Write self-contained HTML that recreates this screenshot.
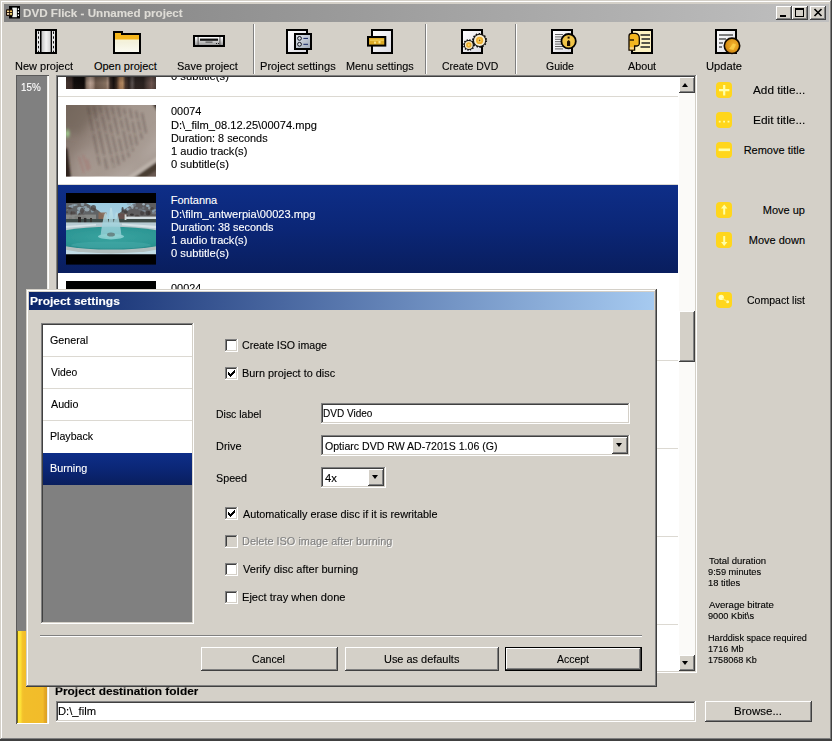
<!DOCTYPE html>
<html><head><meta charset="utf-8"><title>DVD Flick</title>
<style>
html,body{margin:0;padding:0;}
body{width:832px;height:741px;overflow:hidden;background:#d4d0c8;position:relative;font-family:"Liberation Sans",sans-serif;font-size:11px;}
.a{position:absolute;box-sizing:border-box;}
.t{-webkit-text-stroke:0.12px;position:absolute;white-space:nowrap;transform-origin:0 50%;display:inline-block;font-family:"Liberation Sans",sans-serif;}
/* 3D borders */
.win{background:#d4d0c8;box-shadow:inset -1px -1px #404040,inset 1px 1px #d4d0c8,inset -2px -2px #808080,inset 2px 2px #fff;}
.btn{background:#d4d0c8;box-shadow:inset -1px -1px #404040,inset 1px 1px #fff,inset -2px -2px #808080,inset 2px 2px #d4d0c8;}
.sunk{background:#fff;box-shadow:inset -1px -1px #fff,inset 1px 1px #808080,inset -2px -2px #d4d0c8,inset 2px 2px #404040;}
.sep{width:2px;border-left:1px solid #808080;border-right:1px solid #fff;}
.hsep{height:2px;border-top:1px solid #808080;border-bottom:1px solid #fff;}
.yi{background:#ffd61c;border-radius:4px;width:16.6px;height:16.4px;}
.isep{height:1px;background:#dcd9d2;}
.cb{width:13px;height:13px;}
svg{position:absolute;overflow:visible;}

</style></head>
<body>
<!-- main window frame -->
<div class="a" style="left:0;top:0;width:832px;height:741px;background:#404040;"></div>
<div class="a win" style="left:0;top:0;width:832px;height:740.4px;"></div>
<!-- inactive title bar -->
<div class="a" style="left:4px;top:4px;width:825px;height:18px;background:linear-gradient(90deg,#808080 0%,#c0c0c0 100%);"></div>
<!--TITLEICON-->
<!-- caption buttons -->
<div class="a btn" style="left:776px;top:6px;width:16px;height:14px;"></div>
<div class="a btn" style="left:792px;top:6px;width:16px;height:14px;"></div>
<div class="a btn" style="left:810px;top:6px;width:16px;height:14px;"></div>
<div class="a" style="left:780px;top:15px;width:6px;height:2px;background:#000;"></div>
<div class="a" style="left:795px;top:8px;width:9px;height:9px;border:1px solid #000;border-top-width:2px;"></div>
<svg style="left:814px;top:9px;" width="8" height="7" viewBox="0 0 8 7"><path d="M0.5 0 L7.5 7 M7.5 0 L0.5 7" stroke="#000" stroke-width="1.6" fill="none"/></svg>

<!-- toolbar separators -->
<div class="a sep" style="left:253px;top:24px;height:50px;"></div>
<div class="a sep" style="left:425px;top:24px;height:50px;"></div>
<div class="a sep" style="left:515px;top:24px;height:50px;"></div>
<!--TOOLICONS_START-->
<svg style="left:0;top:0;" width="832" height="76" viewBox="0 0 832 76">
<defs>
<linearGradient id="silv" x1="0" y1="0" x2="1" y2="0"><stop offset="0" stop-color="#c4c4c4"/><stop offset="0.5" stop-color="#f4f4f4"/><stop offset="1" stop-color="#d0d0d0"/></linearGradient>
<linearGradient id="silv2" x1="0" y1="0" x2="0" y2="1"><stop offset="0" stop-color="#ffffff"/><stop offset="1" stop-color="#9c9c9c"/></linearGradient>
<linearGradient id="cream" x1="0" y1="0" x2="0" y2="1"><stop offset="0" stop-color="#fdf6c4"/><stop offset="0.5" stop-color="#f3f1dc"/><stop offset="1" stop-color="#fbfbf3"/></linearGradient>
<linearGradient id="page" x1="0" y1="0" x2="1" y2="1"><stop offset="0" stop-color="#ffffff"/><stop offset="1" stop-color="#dcdce4"/></linearGradient>
<linearGradient id="bluep" x1="0" y1="0" x2="1" y2="1"><stop offset="0" stop-color="#e4e8ee"/><stop offset="1" stop-color="#9aa6b8"/></linearGradient>
<radialGradient id="gold2" cx="0.5" cy="0.5" r="0.6"><stop offset="0" stop-color="#f4cc50"/><stop offset="0.75" stop-color="#eec044"/><stop offset="1" stop-color="#f6e4a0"/></radialGradient>
<radialGradient id="gold3" cx="0.6" cy="0.45" r="0.7"><stop offset="0" stop-color="#f4b430"/><stop offset="0.6" stop-color="#dc9418"/><stop offset="1" stop-color="#b87010"/></radialGradient>
<radialGradient id="gold" cx="0.6" cy="0.4" r="0.7"><stop offset="0" stop-color="#fcd04a"/><stop offset="1" stop-color="#d8921a"/></radialGradient>
</defs>
<!-- title icon -->
<g>
<rect x="9" y="6" width="11" height="12.5" fill="#000"/>
<rect x="12.3" y="7.6" width="4.6" height="9.6" fill="#eef2ee"/>
<rect x="17.8" y="8.4" width="1.2" height="1.6" fill="#fff"/><rect x="17.8" y="11.4" width="1.2" height="1.6" fill="#fff"/><rect x="17.8" y="14.4" width="1.2" height="1.6" fill="#fff"/>
<rect x="6" y="9.3" width="6.8" height="6.6" rx="1" fill="#1c0e04"/>
<rect x="7" y="10.5" width="2.2" height="1.6" fill="#f8d890"/><rect x="10" y="10.5" width="2" height="1.6" fill="#f4c860"/>
<rect x="7" y="13" width="2.2" height="1.8" fill="#f4d8b0"/><rect x="10" y="13" width="2" height="1.8" fill="#f0d878"/>
</g>
<!-- new project: film -->
<g>
<rect x="35" y="29" width="22" height="25" fill="#000"/>
<rect x="37" y="31" width="3" height="21" fill="#e6e6e6"/>
<rect x="52" y="31" width="3" height="21" fill="#e6e6e6"/>
<path d="M38.5 31.5 V52" stroke="#111" stroke-width="1" stroke-dasharray="2.4 2.4" fill="none"/>
<path d="M53.5 31.5 V52" stroke="#111" stroke-width="1" stroke-dasharray="2.4 2.4" fill="none"/>
<rect x="41.5" y="31" width="9.2" height="21" fill="url(#silv)"/>
</g>
<!-- open project: folder -->
<g>
<path d="M114 32 H122 V34 H140 V53 H114 Z" fill="url(#cream)" stroke="#000" stroke-width="2" stroke-linejoin="miter"/>
<path d="M115 33 H121 V35 H139 V39.6 H115 Z" fill="#f5b61c"/>
</g>
<!-- save project: drive -->
<g>
<rect x="193" y="35" width="32" height="12" fill="#000"/>
<rect x="195" y="37" width="28" height="8" fill="url(#silv2)"/>
<rect x="197.6" y="37" width="1" height="8" fill="#555"/><rect x="219.4" y="37" width="1" height="8" fill="#555"/>
<rect x="200" y="38.6" width="18" height="2.2" fill="#111"/>
<rect x="205.5" y="41.6" width="7" height="1" fill="#444"/>
<rect x="216" y="43" width="1" height="1" fill="#222"/><rect x="218" y="43" width="1" height="1" fill="#222"/>
</g>
<!-- project settings -->
<g>
<rect x="287" y="30" width="20" height="23" fill="url(#page)" stroke="#000" stroke-width="2"/>
<rect x="295" y="34" width="16" height="15" fill="url(#bluep)" stroke="#000" stroke-width="2"/>
<circle cx="299.5" cy="38.4" r="1.9" fill="#d4d8e0" stroke="#101420" stroke-width="1"/>
<circle cx="299.5" cy="44.3" r="1.9" fill="#d4d8e0" stroke="#101420" stroke-width="1"/>
<path d="M303.4 38.4 H308 M303.4 44.3 H308" stroke="#102060" stroke-width="1"/>
</g>
<!-- menu settings -->
<g>
<rect x="372" y="30" width="20" height="23" fill="url(#page)" stroke="#000" stroke-width="2"/>
<rect x="368" y="37" width="17.3" height="8.6" fill="#dcaa26" stroke="#000" stroke-width="2"/>
<rect x="370" y="39.6" width="14" height="1" fill="#f8dc6c"/>
<rect x="374" y="41.6" width="2" height="2" fill="#fbe48a"/><rect x="378.5" y="41" width="2" height="2.4" fill="#fbe48a"/>
</g>
<!-- create dvd -->
<g>
<rect x="462" y="30" width="20" height="23" fill="url(#page)" stroke="#000" stroke-width="2"/>
<g transform="translate(468.8,45)">
<circle r="5" fill="#111" stroke="#111" stroke-width="1.6" stroke-dasharray="1.3 1.3"/>
<circle r="4" fill="#f4e6c0"/><circle r="2.7" fill="#eeb030"/><circle r="0.9" fill="#f8dc80"/>
</g>
<g transform="translate(479.6,40.4)">
<circle r="6.6" fill="#111" stroke="#111" stroke-width="1.8" stroke-dasharray="1.5 1.5"/>
<circle r="5.6" fill="#f6ecd0"/><circle r="3.6" fill="#eeb030"/><circle r="1.9" fill="#f6d060"/><circle r="0.8" fill="#7a4a10"/>
</g>
</g>
<!-- guide -->
<g>
<rect x="552" y="30" width="20" height="23" fill="url(#page)" stroke="#000" stroke-width="2"/>
<path d="M555 34.5 H563 M555 36.9 H563 M555 39.3 H563 M555 41.7 H563 M555 44.1 H563 M555 46.5 H563 M555 48.9 H563" stroke="#555" stroke-width="0.9"/>
<circle cx="568.6" cy="41.2" r="7.2" fill="url(#gold2)" stroke="#000" stroke-width="1.8"/>
<rect x="567.6" y="36.6" width="2" height="2" fill="#201000"/>
<path d="M567 46 V41.6 L568.6 40 L570.2 41.6 V46 Z" fill="#201000"/>
</g>
<!-- about -->
<g>
<rect x="632" y="30" width="20" height="23" fill="#fdf2c2" stroke="#000" stroke-width="2"/>
<path d="M640.5 35 H650 M641.5 39 H650 M641.5 43 H650 M640.5 47 H650" stroke="#222" stroke-width="1.6"/>
<path d="M629 36 Q629 33.4 632 33.4 H635.5 Q639.3 34 639.3 38 V44 Q639 45.6 637 46 H634.6 V50.2 H629 Z" fill="#f3b620" stroke="#100800" stroke-width="1.3"/>
<path d="M629.6 40 H634" stroke="#100800" stroke-width="1.3"/>
<rect x="629.8" y="47.2" width="4" height="2.2" fill="#f8d48c"/>
</g>
<!-- update -->
<g>
<rect x="716" y="30" width="20" height="23" fill="url(#page)" stroke="#000" stroke-width="2"/>
<path d="M719 35 H733 M719 39 H726 M719 43 H723 M719 47 H722" stroke="#555" stroke-width="1.6"/>
<circle cx="732" cy="45.8" r="7.7" fill="url(#gold3)" stroke="#100800" stroke-width="1.6"/>
<path d="M729 49 L733 43.5 L736 44.5 L733.5 50 Z" fill="#fcd24a" opacity="0.8"/>
</g>
</svg>
<!--TOOLICONS_END-->

<!-- progress bar -->
<div class="a" style="left:16px;top:75px;width:33px;height:649px;background:#808080;box-shadow:inset 1px 1px #5a5a5a,inset -1px -1px #fff,inset -2px 0 #f0eee8;"></div>
<div class="a" style="left:17px;top:631px;width:30px;height:92px;background:linear-gradient(90deg,#5e5210 0,#8a7a14 0.8px,#ffe436 1.4px,#fde038 3.4px,#f4c42c 5.5px,#f2be2a 7px,#f2bc2a 26px,#e6aa26 27.5px,#dca022 30px);"></div>

<!-- title list -->
<div class="a sunk" style="left:56px;top:75px;width:641px;height:598px;"></div>
<div class="a" id="list" style="left:58px;top:77px;width:637px;height:594px;overflow:hidden;background:#fff;">
  <!-- item 1 (partial) thumb -->
  <div class="a" style="left:8px;top:0;width:90px;height:11.7px;background:linear-gradient(180deg,rgba(0,0,0,0.25) 0%,rgba(0,0,0,0) 50%,rgba(60,40,30,0.15) 100%),linear-gradient(90deg,#42342f 0%,#3a2c28 6%,#120e0d 9%,#0e0a0a 20%,#8a7668 23%,#b8a092 27%,#a48c7e 30%,#6c584b 33%,#7a6658 40%,#86705f 44%,#a48c7c 46.5%,#3a2c26 49%,#16100e 53%,#3a2a20 56%,#a87c58 60%,#b08860 63%,#4a382e 66%,#2a2220 70%,#5a5250 73.5%,#2c2422 77%,#2a2220 86%,#4c3e3a 90%,#6e5650 95%,#4a3c38 100%);"></div>
  <div class="a isep" style="left:0;top:19px;width:620px;"></div>
  <!-- item 2 thumb -->
  <svg style="left:8px;top:28px;" width="90" height="71.5" viewBox="0 0 90 71.5">
<defs>
<linearGradient id="p2" x1="0" y1="0" x2="1" y2="0.5"><stop offset="0" stop-color="#786960"/><stop offset="0.3" stop-color="#8c7d74"/><stop offset="0.6" stop-color="#a3968d"/><stop offset="1" stop-color="#a89c94"/></linearGradient>
<radialGradient id="g2" cx="0.5" cy="0.5" r="0.5"><stop offset="0" stop-color="#b4eca0" stop-opacity="0.95"/><stop offset="0.5" stop-color="#98cc8a" stop-opacity="0.55"/><stop offset="1" stop-color="#88a080" stop-opacity="0"/></radialGradient>
<filter id="b2" x="-5%" y="-5%" width="110%" height="110%"><feGaussianBlur stdDeviation="0.8"/></filter>
<filter id="b2b" x="-20%" y="-20%" width="140%" height="140%"><feGaussianBlur stdDeviation="4"/></filter>
<clipPath id="c2"><rect x="0" y="0" width="90" height="71.5"/></clipPath>
</defs>
<g clip-path="url(#c2)">
<rect x="-2" y="-2" width="94" height="76" fill="url(#p2)"/>
<g filter="url(#b2b)">
<path d="M-6 -6 H40 L14 30 L-6 26 Z" fill="#6e6058" opacity="0.55"/>
<path d="M30 80 L96 44 V22 L56 80 Z" fill="#b8aea6" opacity="0.6"/>
<path d="M8 50 L30 40 L28 76 L8 76 Z" fill="#aa9c94" opacity="0.5"/>
</g>
<g filter="url(#b2)">
<path d="M58 74 L92 51 V56 L66 74 Z" fill="#c4bab2" opacity="0.7"/>
<path d="M66 74 L92 56 V74 Z" fill="#4a3c33"/>
<path d="M78 74 L92 64 V74 Z" fill="#6a5a52"/>
<path d="M-2 42 L1.5 44 L5 74 H-2 Z" fill="#2e221e"/>
<path d="M86.5 -2 H92 V7 Z" fill="#2a201c"/>
<g stroke="#3e302a" stroke-width="1.4" fill="none" opacity="0.42">
<path d="M22 2 L34 62" stroke-dasharray="9 2 14 3 20 2"/><path d="M28 2 L41 64" stroke-dasharray="12 2 8 2 25 3"/><path d="M34 2 L48 62" stroke-dasharray="7 2 16 2 22 2"/><path d="M40 2 L53 60" stroke-dasharray="14 3 10 2 18 2"/><path d="M46 2 L58 56" stroke-dasharray="8 2 19 3 14 2"/><path d="M52 2 L63 52" stroke-dasharray="11 2 9 2 20 2"/><path d="M58 4 L67 46" stroke-dasharray="6 2 15 3 12 2"/><path d="M64 4 L71 40" stroke-dasharray="10 3 12 2"/><path d="M70 6 L76 34" stroke-dasharray="8 2 10 2"/><path d="M76 8 L80 28"/>
</g>
<g stroke="#a4504c" stroke-width="1.2" fill="none" opacity="0.4">
<path d="M13 52 L18 68"/><path d="M17 50 L22 66"/><path d="M21 54 L24 64"/>
</g>
<ellipse cx="1.5" cy="28.5" rx="3.6" ry="6.5" fill="url(#g2)"/>
</g>
</g>
</svg>
  <div class="a isep" style="left:0;top:107px;width:620px;"></div>
  <!-- item 3 selected -->
  <div class="a" style="left:0;top:108px;width:620px;height:88px;background:linear-gradient(180deg,#0e2e88 0%,#0b2676 50%,#091e5e 100%);"></div>
  <svg style="left:8px;top:116px;" width="90" height="71.6" viewBox="0 0 90 71.6">
<defs>
<filter id="b3" x="-5%" y="-5%" width="110%" height="110%"><feGaussianBlur stdDeviation="0.7"/></filter>
<clipPath id="c3"><rect x="0" y="10" width="90" height="51.2"/></clipPath>
<linearGradient id="sky3" x1="0" y1="0" x2="0" y2="1"><stop offset="0" stop-color="#9ccbe0"/><stop offset="1" stop-color="#c4dde6"/></linearGradient>
<radialGradient id="pool3" cx="0.5" cy="0.45" r="0.6"><stop offset="0" stop-color="#3aa4a0"/><stop offset="0.7" stop-color="#2c9694"/><stop offset="1" stop-color="#2a8a8a"/></radialGradient>
<linearGradient id="jet3" x1="0" y1="0" x2="0" y2="1"><stop offset="0" stop-color="#c4e2ea" stop-opacity="0.85"/><stop offset="0.6" stop-color="#a0d2dc" stop-opacity="0.85"/><stop offset="1" stop-color="#84c8cc" stop-opacity="0.9"/></linearGradient>
</defs>
<rect x="0" y="0" width="90" height="71.6" fill="#000"/>
<g clip-path="url(#c3)">
<rect x="0" y="10" width="90" height="52" fill="url(#sky3)"/>
<g filter="url(#b3)">
<!-- trees -->
<path d="M-2 10 H20 L27 14 L33 18 L37 22 V30 H-2 Z" fill="#5a5656" opacity="0.9"/>
<path d="M92 10 H70 L62 14 L56 18 L51 22 V30 H92 Z" fill="#585252" opacity="0.9"/>
<ellipse cx="9.7" cy="11.9" rx="2.0" ry="0.9" fill="#a4c6da" opacity="0.48"/>
<ellipse cx="1.7" cy="15.3" rx="1.1" ry="1.4" fill="#a4c6da" opacity="0.43"/>
<ellipse cx="16.5" cy="11.1" rx="1.9" ry="2.1" fill="#a4c6da" opacity="0.55"/>
<ellipse cx="11.9" cy="19.8" rx="1.1" ry="2.0" fill="#b8d2e0" opacity="0.50"/>
<ellipse cx="16.2" cy="15.9" rx="1.9" ry="1.8" fill="#a4c6da" opacity="0.55"/>
<ellipse cx="19.2" cy="14.0" rx="1.9" ry="0.9" fill="#a4c6da" opacity="0.57"/>
<ellipse cx="14.9" cy="15.6" rx="2.2" ry="1.5" fill="#7c8894" opacity="0.48"/>
<ellipse cx="7.5" cy="12.2" rx="2.2" ry="0.9" fill="#b8d2e0" opacity="0.53"/>
<ellipse cx="26.3" cy="17.4" rx="1.5" ry="2.2" fill="#a4c6da" opacity="0.53"/>
<ellipse cx="4.9" cy="13.7" rx="2.5" ry="1.4" fill="#a4c6da" opacity="0.62"/>
<ellipse cx="17.2" cy="18.8" rx="1.5" ry="1.8" fill="#7c8894" opacity="0.55"/>
<ellipse cx="13.7" cy="18.5" rx="2.5" ry="1.5" fill="#a4c6da" opacity="0.37"/>
<ellipse cx="21.0" cy="16.6" rx="2.6" ry="2.0" fill="#b8d2e0" opacity="0.60"/>
<ellipse cx="26.6" cy="13.8" rx="2.5" ry="1.3" fill="#a4c6da" opacity="0.52"/>
<ellipse cx="6.5" cy="13.2" rx="2.2" ry="1.4" fill="#7c8894" opacity="0.38"/>
<ellipse cx="13.5" cy="15.7" rx="2.4" ry="1.9" fill="#b8d2e0" opacity="0.60"/>
<ellipse cx="89.6" cy="17.0" rx="1.6" ry="1.1" fill="#a4c6da" opacity="0.41"/>
<ellipse cx="65.4" cy="12.7" rx="1.8" ry="1.6" fill="#b8d2e0" opacity="0.45"/>
<ellipse cx="62.7" cy="15.6" rx="2.0" ry="1.2" fill="#8ea0ae" opacity="0.59"/>
<ellipse cx="74.5" cy="16.4" rx="2.1" ry="0.9" fill="#7c8894" opacity="0.49"/>
<ellipse cx="70.6" cy="15.1" rx="1.6" ry="1.1" fill="#8ea0ae" opacity="0.50"/>
<ellipse cx="61.5" cy="16.2" rx="1.2" ry="1.6" fill="#a4c6da" opacity="0.68"/>
<ellipse cx="77.6" cy="11.2" rx="1.3" ry="1.3" fill="#b8d2e0" opacity="0.68"/>
<ellipse cx="77.3" cy="15.0" rx="1.2" ry="1.5" fill="#7c8894" opacity="0.52"/>
<ellipse cx="68.0" cy="11.9" rx="2.2" ry="1.8" fill="#7c8894" opacity="0.64"/>
<ellipse cx="63.2" cy="10.7" rx="2.5" ry="1.5" fill="#8ea0ae" opacity="0.59"/>
<ellipse cx="87.3" cy="17.7" rx="1.5" ry="1.7" fill="#a4c6da" opacity="0.59"/>
<ellipse cx="66.4" cy="14.0" rx="1.3" ry="1.9" fill="#b8d2e0" opacity="0.57"/>
<ellipse cx="77.6" cy="18.0" rx="2.2" ry="1.1" fill="#8ea0ae" opacity="0.64"/>
<ellipse cx="81.7" cy="12.7" rx="1.8" ry="1.3" fill="#a4c6da" opacity="0.70"/>
<ellipse cx="83.3" cy="15.0" rx="1.3" ry="1.6" fill="#b8d2e0" opacity="0.51"/>
<ellipse cx="88.0" cy="19.9" rx="2.5" ry="1.3" fill="#8ea0ae" opacity="0.39"/>
<ellipse cx="16.0" cy="17.7" rx="2.0" ry="3.0" fill="#463e3c" opacity="0.74"/>
<ellipse cx="16.3" cy="22.1" rx="2.6" ry="1.2" fill="#463e3c" opacity="0.45"/>
<ellipse cx="13.2" cy="23.0" rx="1.4" ry="2.8" fill="#3a3434" opacity="0.72"/>
<ellipse cx="11.3" cy="24.2" rx="2.9" ry="1.8" fill="#3a3434" opacity="0.70"/>
<ellipse cx="2.9" cy="15.2" rx="3.0" ry="1.1" fill="#463e3c" opacity="0.76"/>
<ellipse cx="27.4" cy="15.0" rx="2.7" ry="3.0" fill="#463e3c" opacity="0.77"/>
<ellipse cx="5.3" cy="20.7" rx="1.0" ry="2.6" fill="#463e3c" opacity="0.66"/>
<ellipse cx="17.9" cy="26.1" rx="1.9" ry="2.7" fill="#2e2a2a" opacity="0.41"/>
<ellipse cx="7.2" cy="20.0" rx="2.5" ry="1.7" fill="#463e3c" opacity="0.57"/>
<ellipse cx="4.5" cy="25.7" rx="1.7" ry="1.9" fill="#463e3c" opacity="0.73"/>
<ellipse cx="17.6" cy="24.6" rx="2.8" ry="1.3" fill="#2e2a2a" opacity="0.61"/>
<ellipse cx="0.6" cy="19.2" rx="1.4" ry="1.0" fill="#2e2a2a" opacity="0.47"/>
<ellipse cx="71.0" cy="23.2" rx="2.1" ry="1.7" fill="#463e3c" opacity="0.61"/>
<ellipse cx="71.4" cy="23.9" rx="2.8" ry="1.1" fill="#2e2a2a" opacity="0.51"/>
<ellipse cx="81.8" cy="20.1" rx="2.1" ry="2.5" fill="#2e2a2a" opacity="0.58"/>
<ellipse cx="76.1" cy="20.1" rx="2.0" ry="2.4" fill="#3a3434" opacity="0.60"/>
<ellipse cx="83.1" cy="20.1" rx="1.5" ry="2.0" fill="#3a3434" opacity="0.77"/>
<ellipse cx="86.1" cy="15.8" rx="1.9" ry="1.8" fill="#3a3434" opacity="0.58"/>
<ellipse cx="56.6" cy="16.4" rx="1.1" ry="2.3" fill="#2e2a2a" opacity="0.76"/>
<ellipse cx="59.6" cy="23.0" rx="2.3" ry="1.3" fill="#2e2a2a" opacity="0.79"/>
<ellipse cx="61.9" cy="26.3" rx="1.8" ry="2.0" fill="#463e3c" opacity="0.73"/>
<ellipse cx="59.8" cy="19.0" rx="2.0" ry="1.7" fill="#2e2a2a" opacity="0.54"/>
<ellipse cx="57.3" cy="18.1" rx="1.7" ry="1.9" fill="#463e3c" opacity="0.41"/>
<ellipse cx="65.9" cy="21.7" rx="2.0" ry="1.1" fill="#2e2a2a" opacity="0.79"/>
<!-- buildings -->
<rect x="32.5" y="19.5" width="8" height="7" fill="#8a6a58" opacity="0.9"/>
<rect x="52" y="20.5" width="9" height="5.5" fill="#66504a" opacity="0.9"/>
<rect x="0" y="21.6" width="30" height="4.6" fill="#9a9c9a" opacity="0.65"/>
<!-- hedge / people -->
<rect x="-2" y="26" width="94" height="4" fill="#3e4a46"/>
<rect x="60" y="23.6" width="32" height="2.4" fill="#d4dee2"/>
<rect x="58.6" y="21.4" width="1.8" height="5.6" fill="#cfd8d8"/>
<rect x="12" y="24" width="3" height="6" fill="#2a2826"/><rect x="18" y="25" width="2.4" height="5" fill="#2c2a2a"/><rect x="24" y="25" width="2" height="5" fill="#34302e"/>
<!-- pavement -->
<rect x="-2" y="29.4" width="94" height="10" fill="#b6cad2"/>
<path d="M-2 33 L30 31 L30 32.6 L-2 35 Z" fill="#dfe9ec" opacity="0.8"/>
<path d="M92 33 L56 30.6 L56 32.2 L92 35.4 Z" fill="#dfe9ec" opacity="0.8"/>
<!-- pool -->
<ellipse cx="45" cy="46.8" rx="66" ry="13.6" fill="#b2bebe"/>
<ellipse cx="45" cy="45.2" rx="64" ry="11.4" fill="url(#pool3)"/>
<ellipse cx="45" cy="52" rx="40" ry="3.4" fill="#48acaa" opacity="0.5"/>
<!-- fountain -->
<path d="M34.5 43 Q36 30 38.5 21 Q39.6 19 40.6 21 Q42 26 42.6 30 Q43.5 20 44.2 15.5 Q45 13.6 45.9 15.5 Q47 21 47.6 30 Q48.6 25 49.6 20.5 Q50.6 18.6 51.6 20.5 Q54 30 55.5 43 Q45 47 34.5 43 Z" fill="url(#jet3)"/>
<ellipse cx="45" cy="43.6" rx="13" ry="2.8" fill="#8ed0d2" opacity="0.9"/>
<ellipse cx="45" cy="41.6" rx="4" ry="2" fill="#5a6a68" opacity="0.7"/>
</g>
</g>
</svg>
  <!-- item 4 thumb -->
  <div class="a" style="left:8px;top:204px;width:90px;height:20px;background:#000;"></div>
  <div class="a isep" style="left:0;top:283px;width:620px;"></div>
  <div class="a isep" style="left:0;top:371px;width:620px;"></div>
  <div class="a isep" style="left:0;top:459px;width:620px;"></div>
  <div class="a isep" style="left:0;top:547px;width:620px;"></div>
  <!-- scrollbar -->
  <div class="a" style="left:621px;top:0;width:16px;height:594px;background:#fbfaf8;"></div>
  <div class="a btn" style="left:621px;top:0;width:16px;height:16px;"></div>
  <div class="a" style="left:624.3px;top:6px;width:0;height:0;border-left:3.5px solid transparent;border-right:3.5px solid transparent;border-bottom:4px solid #000;"></div>
  <div class="a btn" style="left:621px;top:578px;width:16px;height:16px;"></div>
  <div class="a" style="left:624.3px;top:584.3px;width:0;height:0;border-left:3.5px solid transparent;border-right:3.5px solid transparent;border-top:4px solid #000;"></div>
  <div class="a btn" style="left:621px;top:234px;width:16px;height:51px;"></div>
</div>

<!-- right panel icons -->
<div class="a yi" style="left:715.5px;top:82px;"></div>
<div class="a yi" style="left:715.5px;top:112px;"></div>
<div class="a yi" style="left:715.5px;top:142px;"></div>
<div class="a yi" style="left:715.5px;top:202px;"></div>
<div class="a yi" style="left:715.5px;top:232px;"></div>
<div class="a yi" style="left:715.5px;top:292px;"></div>
<svg style="left:0;top:0;" width="832" height="320" viewBox="0 0 832 320">
<g stroke="#ffffa8" fill="none" stroke-linecap="butt">
<path d="M719 90.2 H729.4 M724.2 85 V95.4" stroke-width="2.2"/>
<path d="M718.8 121.6 H720.6 M723.2 121.6 H725 M727.6 121.6 H729.4" stroke-width="1.8"/>
<path d="M718.6 149.8 H730" stroke-width="2.6"/>
<path d="M724.2 206 V214.6" stroke-width="2"/>
<path d="M724.2 236 V244" stroke-width="2"/>
</g>
<path d="M721 208.6 L724.2 204.6 L727.4 208.6 Z" fill="#ffffa8"/>
<path d="M721 242 L724.2 246 L727.4 242 Z" fill="#ffffa8"/>
<circle cx="721.2" cy="297.4" r="2.7" fill="#ffffb8"/>
<circle cx="727.6" cy="301.8" r="1.5" fill="#ffffb8"/>
<path d="M722.5 298.5 L727 301.5" stroke="#ffee70" stroke-width="1.4"/>
</svg>

<!-- bottom: destination -->
<div class="a sunk" style="left:56px;top:701px;width:640px;height:21px;"></div>
<div class="a btn" style="left:705px;top:701px;width:107px;height:21px;"></div>

<!-- dialog -->
<div class="a win" style="left:26px;top:289px;width:631px;height:398px;"></div>
<div class="a" style="left:29px;top:292px;width:625px;height:18px;background:linear-gradient(90deg,#0a246a 0%,#a6caf0 100%);"></div>
<!-- category list -->
<div class="a sunk" style="left:41px;top:323px;width:153px;height:301px;"></div>
<div class="a" style="left:43px;top:325px;width:149px;height:297px;background:#808080;overflow:hidden;">
  <div class="a" style="left:0;top:0;width:149px;height:128px;background:#fff;"></div>
  <div class="a isep" style="left:0;top:31px;width:149px;"></div>
  <div class="a isep" style="left:0;top:63px;width:149px;"></div>
  <div class="a isep" style="left:0;top:95px;width:149px;"></div>
  <div class="a" style="left:0;top:128px;width:149px;height:32px;background:linear-gradient(180deg,#0e2e88 0%,#0b2676 50%,#091e5e 100%);"></div>
</div>
<!-- checkboxes -->
<div class="a sunk cb" style="left:225px;top:339px;"></div>
<div class="a sunk cb" style="left:225px;top:367px;"></div>
<div class="a sunk cb" style="left:225px;top:507px;"></div>
<div class="a sunk cb" style="left:225px;top:535px;background:#d4d0c8;"></div>
<div class="a sunk cb" style="left:225px;top:563px;"></div>
<div class="a sunk cb" style="left:225px;top:591px;"></div>
<svg style="left:228px;top:370px;" width="7" height="7" viewBox="0 0 7 7" shape-rendering="crispEdges"><g fill="#000"><rect x="0" y="2" width="1" height="3"/><rect x="1" y="3" width="1" height="3"/><rect x="2" y="4" width="1" height="3"/><rect x="3" y="3" width="1" height="3"/><rect x="4" y="2" width="1" height="3"/><rect x="5" y="1" width="1" height="3"/><rect x="6" y="0" width="1" height="3"/></g></svg>
<svg style="left:228px;top:510px;" width="7" height="7" viewBox="0 0 7 7" shape-rendering="crispEdges"><g fill="#000"><rect x="0" y="2" width="1" height="3"/><rect x="1" y="3" width="1" height="3"/><rect x="2" y="4" width="1" height="3"/><rect x="3" y="3" width="1" height="3"/><rect x="4" y="2" width="1" height="3"/><rect x="5" y="1" width="1" height="3"/><rect x="6" y="0" width="1" height="3"/></g></svg>
<!-- fields -->
<div class="a sunk" style="left:321px;top:403px;width:309px;height:21px;"></div>
<div class="a sunk" style="left:321px;top:435px;width:309px;height:21px;"></div>
<div class="a btn" style="left:612px;top:437px;width:16px;height:17px;"></div>
<div class="a" style="left:616px;top:443px;width:0;height:0;border-left:3.5px solid transparent;border-right:3.5px solid transparent;border-top:4px solid #000;"></div>
<div class="a sunk" style="left:321px;top:467px;width:65px;height:21px;"></div>
<div class="a btn" style="left:368px;top:469px;width:16px;height:17px;"></div>
<div class="a" style="left:372px;top:475px;width:0;height:0;border-left:3.5px solid transparent;border-right:3.5px solid transparent;border-top:4px solid #000;"></div>
<!-- etched line -->
<div class="a hsep" style="left:40px;top:635px;width:602px;"></div>
<!-- buttons -->
<div class="a btn" style="left:201px;top:647px;width:137px;height:24px;"></div>
<div class="a btn" style="left:345px;top:647px;width:154px;height:24px;"></div>
<div class="a" style="left:505px;top:647px;width:137px;height:24px;background:#000;"></div>
<div class="a btn" style="left:506px;top:648px;width:135px;height:22px;"></div>

<span class="t" style="left:23.27px;top:5.50px;font-size:11px;line-height:14px;color:#dedcd6;font-weight:bold;transform:scaleX(1.0578);">DVD Flick - Unnamed project</span>
<span class="t" style="left:14.85px;top:59.30px;font-size:11px;line-height:14px;color:#000;transform:scaleX(0.9991);">New project</span>
<span class="t" style="left:93.90px;top:59.30px;font-size:11px;line-height:14px;color:#000;transform:scaleX(1.0000);">Open project</span>
<span class="t" style="left:177.00px;top:59.30px;font-size:11px;line-height:14px;color:#000;transform:scaleX(0.9959);">Save project</span>
<span class="t" style="left:259.55px;top:59.30px;font-size:11px;line-height:14px;color:#000;transform:scaleX(1.0061);">Project settings</span>
<span class="t" style="left:345.56px;top:59.30px;font-size:11px;line-height:14px;color:#000;transform:scaleX(0.9881);">Menu settings</span>
<span class="t" style="left:442.32px;top:59.30px;font-size:11px;line-height:14px;color:#000;transform:scaleX(0.9504);">Create DVD</span>
<span class="t" style="left:545.82px;top:59.30px;font-size:11px;line-height:14px;color:#000;transform:scaleX(0.9509);">Guide</span>
<span class="t" style="left:627.50px;top:59.30px;font-size:11px;line-height:14px;color:#000;transform:scaleX(0.9774);">About</span>
<span class="t" style="left:705.54px;top:59.30px;font-size:11px;line-height:14px;color:#000;transform:scaleX(1.0145);">Update</span>
<span class="t" style="left:21.33px;top:80.00px;font-size:11px;line-height:14px;color:#fff;transform:scaleX(0.8952);">15%</span>
<span class="t" style="left:171.25px;top:68.50px;font-size:11px;line-height:14px;color:#000;transform:scaleX(1.0179);clip-path:inset(8.5px 0 0 0);">0 subtitle(s)</span>
<span class="t" style="left:171.25px;top:104.00px;font-size:11px;line-height:14px;color:#000;transform:scaleX(0.9917);">00074</span>
<span class="t" style="left:170.74px;top:117.50px;font-size:11px;line-height:14px;color:#000;transform:scaleX(1.0105);">D:\_film_08.12.25\00074.mpg</span>
<span class="t" style="left:170.76px;top:130.50px;font-size:11px;line-height:14px;color:#000;transform:scaleX(0.9871);">Duration: 8 seconds</span>
<span class="t" style="left:170.74px;top:143.50px;font-size:11px;line-height:14px;color:#000;transform:scaleX(1.0067);">1 audio track(s)</span>
<span class="t" style="left:171.25px;top:156.50px;font-size:11px;line-height:14px;color:#000;transform:scaleX(1.0179);">0 subtitle(s)</span>
<span class="t" style="left:170.75px;top:193.00px;font-size:11px;line-height:14px;color:#fff;transform:scaleX(1.0000);">Fontanna</span>
<span class="t" style="left:170.74px;top:206.50px;font-size:11px;line-height:14px;color:#fff;transform:scaleX(1.0088);">D:\film_antwerpia\00023.mpg</span>
<span class="t" style="left:170.76px;top:219.50px;font-size:11px;line-height:14px;color:#fff;transform:scaleX(0.9854);">Duration: 38 seconds</span>
<span class="t" style="left:170.74px;top:232.50px;font-size:11px;line-height:14px;color:#fff;transform:scaleX(1.0067);">1 audio track(s)</span>
<span class="t" style="left:171.25px;top:245.50px;font-size:11px;line-height:14px;color:#fff;transform:scaleX(1.0179);">0 subtitle(s)</span>
<span class="t" style="left:171.25px;top:280.50px;font-size:11px;line-height:14px;color:#000;transform:scaleX(0.9917);clip-path:inset(0 0 5.5px 0);">00024</span>
<span class="t" style="left:753.00px;top:83.00px;font-size:11px;line-height:14px;color:#000;transform:scaleX(1.0687);">Add title...</span>
<span class="t" style="left:752.79px;top:113.00px;font-size:11px;line-height:14px;color:#000;transform:scaleX(1.0845);">Edit title...</span>
<span class="t" style="left:743.65px;top:143.00px;font-size:11px;line-height:14px;color:#000;transform:scaleX(1.0000);">Remove title</span>
<span class="t" style="left:762.75px;top:203.00px;font-size:11px;line-height:14px;color:#000;transform:scaleX(1.0000);">Move up</span>
<span class="t" style="left:748.75px;top:233.00px;font-size:11px;line-height:14px;color:#000;transform:scaleX(1.0000);">Move down</span>
<span class="t" style="left:746.52px;top:293.00px;font-size:11px;line-height:14px;color:#000;transform:scaleX(0.9583);">Compact list</span>
<span class="t" style="left:708.70px;top:554.75px;font-size:9.5px;line-height:12.5px;color:#000;transform:scaleX(1.0018);">Total duration</span>
<span class="t" style="left:708.46px;top:565.75px;font-size:9.5px;line-height:12.5px;color:#000;transform:scaleX(0.9759);">9:59 minutes</span>
<span class="t" style="left:708.21px;top:576.75px;font-size:9.5px;line-height:12.5px;color:#000;transform:scaleX(0.9844);">18 titles</span>
<span class="t" style="left:708.70px;top:598.75px;font-size:9.5px;line-height:12.5px;color:#000;transform:scaleX(1.0094);">Average bitrate</span>
<span class="t" style="left:708.46px;top:609.75px;font-size:9.5px;line-height:12.5px;color:#000;transform:scaleX(0.9681);">9000 Kbit\s</span>
<span class="t" style="left:707.98px;top:631.75px;font-size:9.5px;line-height:12.5px;color:#000;transform:scaleX(0.9592);">Harddisk space required</span>
<span class="t" style="left:708.22px;top:642.75px;font-size:9.5px;line-height:12.5px;color:#000;transform:scaleX(0.9655);">1716 Mb</span>
<span class="t" style="left:708.22px;top:653.75px;font-size:9.5px;line-height:12.5px;color:#000;transform:scaleX(0.9545);">1758068 Kb</span>
<span class="t" style="left:55.26px;top:684.00px;font-size:11px;line-height:14px;color:#000;font-weight:bold;transform:scaleX(1.0813);clip-path:inset(3.4px 0 0 0);">Project destination folder</span>
<span class="t" style="left:57.54px;top:704.00px;font-size:11px;line-height:14px;color:#000;transform:scaleX(1.0194);">D:\_film</span>
<span class="t" style="left:733.62px;top:704.00px;font-size:11px;line-height:14px;color:#000;transform:scaleX(1.0463);">Browse...</span>
<span class="t" style="left:30.46px;top:294.00px;font-size:11px;line-height:14px;color:#fff;font-weight:bold;transform:scaleX(1.0887);">Project settings</span>
<span class="t" style="left:50.01px;top:333.00px;font-size:11px;line-height:14px;color:#000;transform:scaleX(0.9737);">General</span>
<span class="t" style="left:50.50px;top:365.00px;font-size:11px;line-height:14px;color:#000;transform:scaleX(0.9382);">Video</span>
<span class="t" style="left:50.50px;top:397.00px;font-size:11px;line-height:14px;color:#000;transform:scaleX(0.9730);">Audio</span>
<span class="t" style="left:49.78px;top:429.00px;font-size:11px;line-height:14px;color:#000;transform:scaleX(0.9659);">Playback</span>
<span class="t" style="left:49.76px;top:461.00px;font-size:11px;line-height:14px;color:#fff;transform:scaleX(0.9808);">Burning</span>
<span class="t" style="left:242.32px;top:338.00px;font-size:11px;line-height:14px;color:#000;transform:scaleX(0.9650);">Create ISO image</span>
<span class="t" style="left:242.06px;top:366.00px;font-size:11px;line-height:14px;color:#000;transform:scaleX(0.9887);">Burn project to disc</span>
<span class="t" style="left:215.59px;top:406.50px;font-size:11px;line-height:14px;color:#000;transform:scaleX(0.9514);">Disc label</span>
<span class="t" style="left:215.56px;top:438.50px;font-size:11px;line-height:14px;color:#000;transform:scaleX(0.9918);">Drive</span>
<span class="t" style="left:215.81px;top:470.50px;font-size:11px;line-height:14px;color:#000;transform:scaleX(0.9756);">Speed</span>
<span class="t" style="left:322.72px;top:405.80px;font-size:11px;line-height:14px;color:#000;transform:scaleX(0.9108);">DVD Video</span>
<span class="t" style="left:324.52px;top:438.50px;font-size:11px;line-height:14px;color:#000;transform:scaleX(0.9608);">Optiarc DVD RW AD-7201S 1.06 (G)</span>
<span class="t" style="left:324.74px;top:470.50px;font-size:11px;line-height:14px;color:#000;transform:scaleX(1.0222);">4x</span>
<span class="t" style="left:242.50px;top:506.50px;font-size:11px;line-height:14px;color:#000;transform:scaleX(0.9848);">Automatically erase disc if it is rewritable</span>
<span class="t" style="left:241.76px;top:534.00px;font-size:11px;line-height:14px;color:#808080;transform:scaleX(0.9917);text-shadow:1px 1px 0 #fff;">Delete ISO image after burning</span>
<span class="t" style="left:242.50px;top:562.00px;font-size:11px;line-height:14px;color:#000;transform:scaleX(1.0022);">Verify disc after burning</span>
<span class="t" style="left:241.74px;top:590.00px;font-size:11px;line-height:14px;color:#000;transform:scaleX(1.0074);">Eject tray when done</span>
<span class="t" style="left:252.02px;top:652.00px;font-size:11px;line-height:14px;color:#000;transform:scaleX(0.9624);">Cancel</span>
<span class="t" style="left:383.65px;top:652.00px;font-size:11px;line-height:14px;color:#000;transform:scaleX(0.9940);">Use as defaults</span>
<span class="t" style="left:556.90px;top:652.00px;font-size:11px;line-height:14px;color:#000;transform:scaleX(0.9511);">Accept</span>

</body></html>
